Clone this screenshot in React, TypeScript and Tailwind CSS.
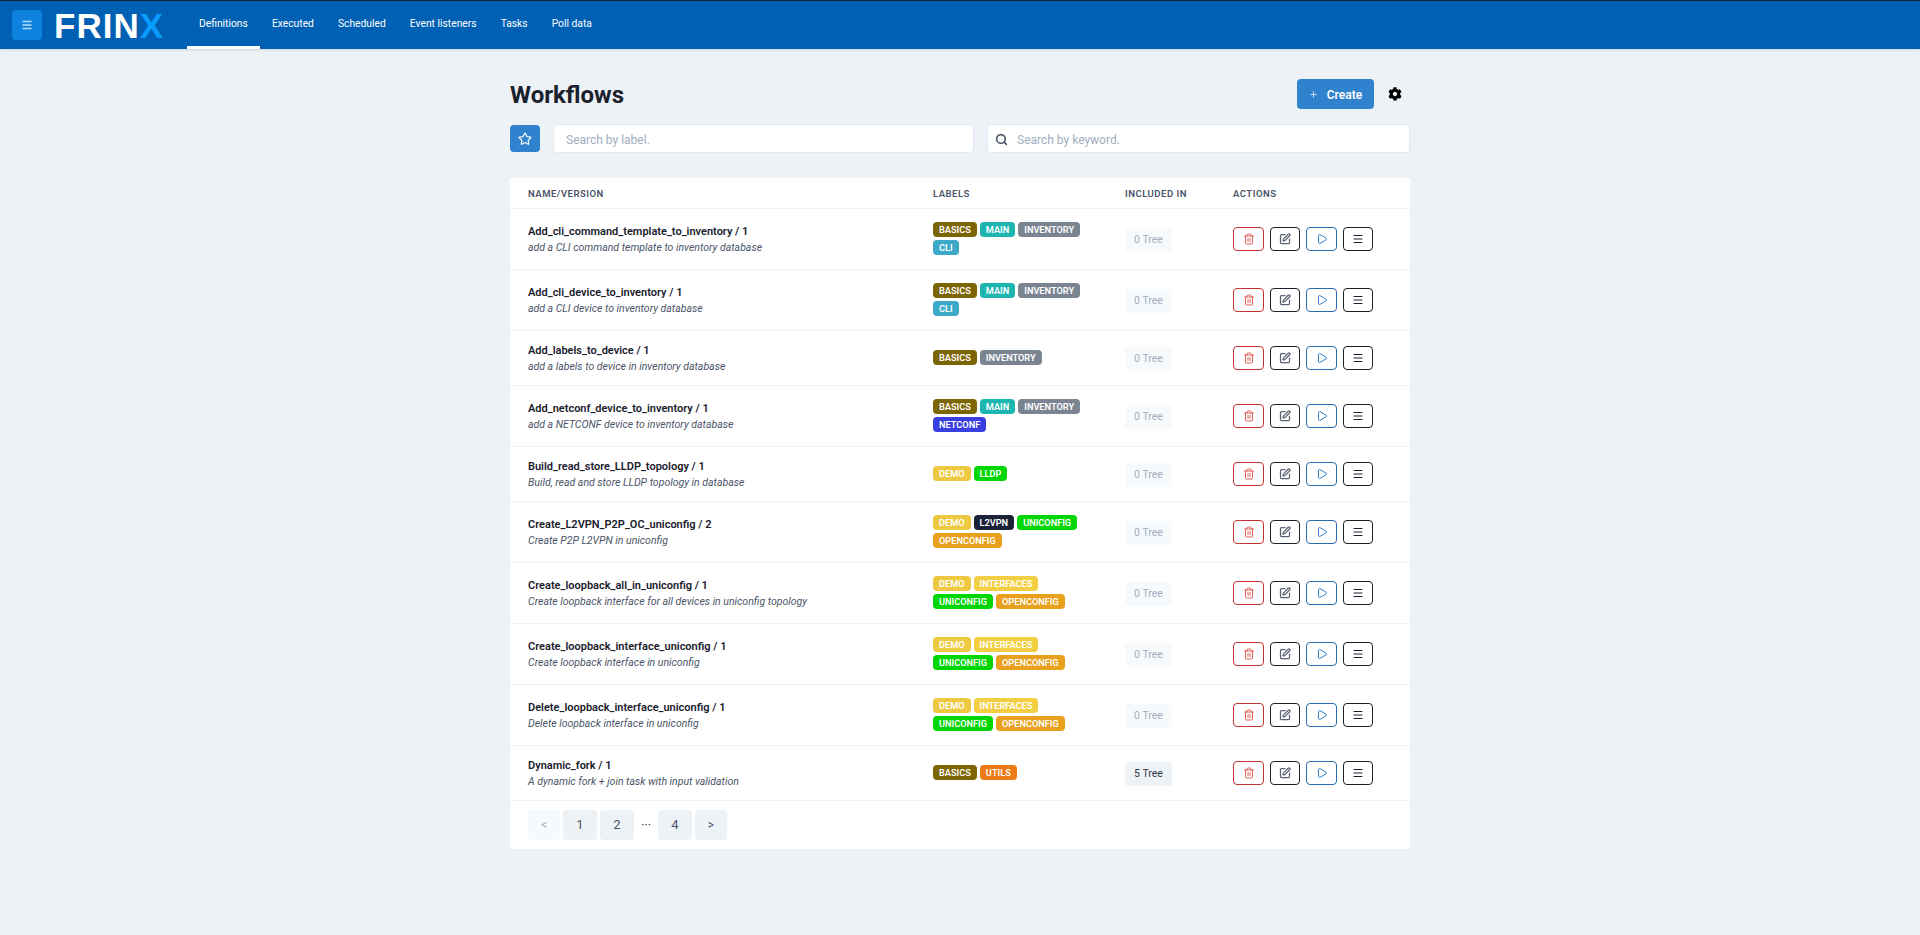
import { Menu, Play, Plus, Search, SquarePen, Star, Trash2 } from "lucide-react";
import { FaCog } from "react-icons/fa";

type Label = { text: string; color: string };

const BASICS: Label = { text: "BASICS", color: "bg-[#7c6503]" };
const MAIN: Label = { text: "MAIN", color: "bg-[#1cb5b0]" };
const INVENTORY: Label = { text: "INVENTORY", color: "bg-[#7a8591]" };
const CLI: Label = { text: "CLI", color: "bg-[#3da9c9]" };
const NETCONF: Label = { text: "NETCONF", color: "bg-[#3a3fe0]" };
const DEMO: Label = { text: "DEMO", color: "bg-[#edc942]" };
const LLDP: Label = { text: "LLDP", color: "bg-[#00d604]" };
const L2VPN: Label = { text: "L2VPN", color: "bg-[#1a2238]" };
const UNICONFIG: Label = { text: "UNICONFIG", color: "bg-[#00d604]" };
const OPENCONFIG: Label = { text: "OPENCONFIG", color: "bg-[#e9a01c]" };
const INTERFACES: Label = { text: "INTERFACES", color: "bg-[#f2cf42]" };
const UTILS: Label = { text: "UTILS", color: "bg-[#ee7a16]" };

const workflows = [
  { name: "Add_cli_command_template_to_inventory / 1", desc: "add a CLI command template to inventory database", labels: [BASICS, MAIN, INVENTORY, CLI], tree: 0 },
  { name: "Add_cli_device_to_inventory / 1", desc: "add a CLI device to inventory database", labels: [BASICS, MAIN, INVENTORY, CLI], tree: 0 },
  { name: "Add_labels_to_device / 1", desc: "add a labels to device in inventory database", labels: [BASICS, INVENTORY], tree: 0 },
  { name: "Add_netconf_device_to_inventory / 1", desc: "add a NETCONF device to inventory database", labels: [BASICS, MAIN, INVENTORY, NETCONF], tree: 0 },
  { name: "Build_read_store_LLDP_topology / 1", desc: "Build, read and store LLDP topology in database", labels: [DEMO, LLDP], tree: 0 },
  { name: "Create_L2VPN_P2P_OC_uniconfig / 2", desc: "Create P2P L2VPN in uniconfig", labels: [DEMO, L2VPN, UNICONFIG, OPENCONFIG], tree: 0 },
  { name: "Create_loopback_all_in_uniconfig / 1", desc: "Create loopback interface for all devices in uniconfig topology", labels: [DEMO, INTERFACES, UNICONFIG, OPENCONFIG], tree: 0 },
  { name: "Create_loopback_interface_uniconfig / 1", desc: "Create loopback interface in uniconfig", labels: [DEMO, INTERFACES, UNICONFIG, OPENCONFIG], tree: 0 },
  { name: "Delete_loopback_interface_uniconfig / 1", desc: "Delete loopback interface in uniconfig", labels: [DEMO, INTERFACES, UNICONFIG, OPENCONFIG], tree: 0 },
  { name: "Dynamic_fork / 1", desc: "A dynamic fork + join task with input validation", labels: [BASICS, UTILS], tree: 5 },
];

const navItems = ["Definitions", "Executed", "Scheduled", "Event listeners", "Tasks", "Poll data"];

function Actions() {
  return (
    <div className="flex gap-[6px]">
      <button className="flex h-[24px] w-[31px] items-center justify-center rounded-[4px] border border-[#c53030] text-[#e0605c]">
        <Trash2 size={12} />
      </button>
      <button className="flex h-[24px] w-[30px] items-center justify-center rounded-[4px] border border-[#1a202c] text-[#5a6472]">
        <SquarePen size={12} strokeWidth={2.5} />
      </button>
      <button className="flex h-[24px] w-[31px] items-center justify-center rounded-[4px] border border-[#2b6cb0] text-[#3182ce]">
        <Play size={12} />
      </button>
      <button className="flex h-[24px] w-[30px] items-center justify-center rounded-[4px] border border-[#1a202c] text-[#1a202c]">
        <Menu size={12} />
      </button>
    </div>
  );
}

export default function App() {
  return (
    <div className="min-h-[935px] bg-[#edf2f7] font-['Roboto',sans-serif] text-[#1a202c]">
      <header className="flex h-[49px] items-center border-t border-[#1a202c] bg-[#0060b3] pl-[12px] shadow-[0_1px_3px_rgba(0,0,0,0.12)]">
        <button className="flex h-[30px] w-[30px] items-center justify-center rounded-[4px] bg-[#0f82e0] text-[#b5dcf9]">
          <Menu size={12} strokeWidth={3} />
        </button>
        <div className="ml-[12px] flex w-[109px] font-['Liberation_Sans',sans-serif] text-[35px] leading-none font-bold tracking-[1px] text-white">
          FRIN<span className="text-[#0a9bff]">X</span>
        </div>
        <nav className="ml-[24px] flex h-full">
          {navItems.map((item, i) => (
            <a
              key={item}
              className={`flex items-center px-[12px] text-[10.3px] text-white ${i === 0 ? "border-b-[3px] border-white" : "border-b-[3px] border-transparent"}`}
            >
              {item}
            </a>
          ))}
        </nav>
      </header>

      <main className="mx-auto w-[900px] pt-[30px]">
        <div className="flex h-[30px] items-center justify-between">
          <h1 className="pt-[2px] text-[24px] font-bold">Workflows</h1>
          <div className="flex items-center">
            <button className="flex h-[30px] w-[77px] items-center justify-center gap-[9px] rounded-[4px] bg-[#3182ce] pt-[1px] text-[12px] font-semibold text-white">
              <Plus size={9} />
              Create
            </button>
            <span className="flex w-[36px] pl-[14px] text-black">
              <FaCog size={14} />
            </span>
          </div>
        </div>

        <div className="mt-[15px] flex items-center">
          <button className="flex h-[27px] w-[30px] items-center justify-center rounded-[4px] bg-[#3182ce] text-white">
            <Star size={14} />
          </button>
          <div className="ml-[13px] flex h-[29px] w-[421px] items-center rounded-[4px] border border-[#e2e8f0] bg-white pt-[2px] pl-[12px] text-[12px] text-[#a0aec0]">
            Search by label.
          </div>
          <div className="ml-[13px] flex h-[29px] flex-1 items-center rounded-[4px] border border-[#e2e8f0] bg-white pt-[2px] pl-[7px] text-[12px] text-[#a0aec0]">
            <Search size={13} className="mr-[9px] text-[#4a5568]" strokeWidth={3} />
            Search by keyword.
          </div>
        </div>

        <div className="mt-[25px] bg-white">
          <div className="grid h-[31px] grid-cols-[405px_192px_108px_1fr] items-center border-b border-[#edf2f7] pt-[2px] pl-[18px] text-[9.5px] font-semibold tracking-[0.5px] text-[#4a5568]">
            <span>NAME/VERSION</span>
            <span>LABELS</span>
            <span>INCLUDED IN</span>
            <span>ACTIONS</span>
          </div>
          {workflows.map((w) => (
            <div
              key={w.name}
              className={`grid grid-cols-[405px_192px_108px_1fr] items-center border-b border-[#edf2f7] pl-[18px] ${w.labels.length > 2 ? "h-[61px]" : "h-[55px]"}`}
            >
              <div className="mt-[2px]">
                <div className="text-[11px] leading-[16px] font-semibold text-[#1a202c]">{w.name}</div>
                <div className="text-[10.5px] leading-[16px] text-[#4a5568] italic">{w.desc}</div>
              </div>
              <div className="mb-[2px] flex w-[150px] flex-wrap gap-x-[3px] gap-y-[3px]">
                {w.labels.map((l) => (
                  <span key={l.text} className={`rounded-[4px] px-[6px] text-[9.2px] leading-[15px] font-semibold text-white ${l.color}`}>
                    {l.text}
                  </span>
                ))}
              </div>
              <div>
                <span className={`inline-flex h-[24px] w-[47px] items-center justify-center rounded-[4px] text-[10.5px] ${w.tree ? "bg-[#edf2f7] text-[#2d3748]" : "bg-[#f7fafc] text-[#a0aec0]"}`}>
                  {w.tree} Tree
                </span>
              </div>
              <Actions />
            </div>
          ))}
          <div className="flex h-[48px] items-center gap-[3px] pl-[18px] text-[13px] text-[#4a5568]">
            <span className="flex h-[30px] w-[32px] items-center justify-center rounded-[4px] bg-[#f7fafc] text-[12px] text-[#a0aec0]">&lt;</span>
            <span className="flex h-[30px] w-[34px] items-center justify-center rounded-[4px] bg-[#edf2f7]">1</span>
            <span className="flex h-[30px] w-[34px] items-center justify-center rounded-[4px] bg-[#edf2f7]">2</span>
            <span className="flex w-[18px] justify-center text-[#2d3748]">···</span>
            <span className="flex h-[30px] w-[34px] items-center justify-center rounded-[4px] bg-[#edf2f7]">4</span>
            <span className="flex h-[30px] w-[32px] items-center justify-center rounded-[4px] bg-[#edf2f7] text-[12px]">&gt;</span>
          </div>
        </div>
      </main>
    </div>
  );
}
